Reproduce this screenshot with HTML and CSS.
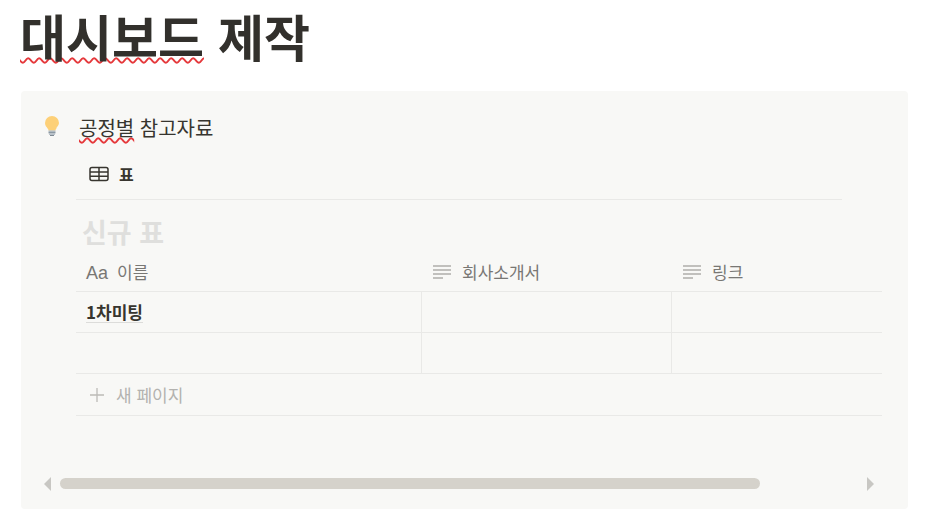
FILE: index.html
```html
<!DOCTYPE html>
<html lang="ko">
<head>
<meta charset="utf-8">
<title>대시보드 제작</title>
<link rel="stylesheet" href="styles.css">
</head>
<body>
<h1 class="title"><span class="spell">대시보드</span> 제작</h1>
<section class="callout">
  <div class="callout-head">
    <svg class="bulb" width="16" height="22" viewBox="0 0 16 22">
      <path d="M8 1a7 7 0 0 0-7 7c0 2.600 1.600 4 2.600 5.400.6.8.9 1.400 1 2.100h6.800c.1-.7.4-1.300 1-2.100C12.400 12 15 10.600 15 8a7 7 0 0 0-7-7z" fill="#fdd078"/>
      <rect x="4.500" y="15.500" width="7" height="1.400" fill="#a9b4bd"/>
      <rect x="4.500" y="17" width="7" height="1.400" fill="#8b98a3"/>
      <rect x="5" y="18.500" width="6" height="1.300" fill="#a9b4bd"/>
      <rect x="6" y="20" width="4" height="1" fill="#7f8a94"/>
    </svg>
    <p class="callout-text"><span class="spell thin">공정별</span> 참고자료</p>
  </div>
  <div class="view-tabs">
    <svg class="tab-icon" width="20" height="16" viewBox="0 0 20 16" fill="none" stroke="#37352f" stroke-width="1.500">
      <rect x="1" y="1.500" width="18" height="13" rx="2"/>
      <path d="M1 6h18M1 10.300h18M10 1.500v13"/>
    </svg>
    <span class="tab-label">표</span>
  </div>
  <h2 class="db-title">신규 표</h2>
  <div class="table">
    <div class="row head">
      <div class="cell c1"><span class="aa">Aa</span><span>이름</span></div>
      <div class="cell c2">
        <svg class="lines" width="19" height="16" viewBox="0 0 19 16" stroke="#8a8883" stroke-width="1.200"><path d="M0 2h18M0 6h18M0 10h18M0 14h10"/></svg>
        <span>회사소개서</span>
      </div>
      <div class="cell c3">
        <svg class="lines" width="19" height="16" viewBox="0 0 19 16" stroke="#8a8883" stroke-width="1.200"><path d="M0 2h18M0 6h18M0 10h18M0 14h10"/></svg>
        <span>링크</span>
      </div>
    </div>
    <div class="row body">
      <div class="cell c1 name"><span class="name-text">1차미팅</span></div>
      <div class="cell c2 bordered"></div>
      <div class="cell c3 bordered"></div>
    </div>
    <div class="row body">
      <div class="cell c1"></div>
      <div class="cell c2 bordered"></div>
      <div class="cell c3 bordered"></div>
    </div>
    <div class="new-page">
      <svg width="14" height="14" viewBox="0 0 14 14" stroke="#bcbbb7" stroke-width="1.300"><path d="M7 0v14M0 7h14"/></svg>
      <span>새 페이지</span>
    </div>
  </div>
  <div class="scrollbar">
    <span class="arrow left"></span>
    <div class="track"><div class="thumb"></div></div>
    <span class="arrow right"></span>
  </div>
</section>
</body>
</html>
```
FILE: styles.css
```css
* { box-sizing: border-box; }
html, body { margin: 0; padding: 0; }
body {
  width: 928px;
  height: 514px;
  overflow: hidden;
  background: #fff;
  color: #37352f;
  font-family: "Noto Sans CJK KR", "Noto Sans", sans-serif;
}
.title {
  margin: 0;
  padding: 0 0 0 20px;
  height: 91px;
  font-size: 50px;
  line-height: 71px;
  font-weight: 700;
  color: #32302c;
}
.spell {
  text-decoration: underline wavy #e5383b;
  text-decoration-thickness: 1.500px;
  text-underline-offset: 0;
  text-decoration-skip-ink: none;
}
.spell.thin { text-underline-offset: 1px; }
.callout {
  margin-left: 21px;
  width: 887px;
  height: 418px;
  background: #f8f8f6;
  border-radius: 4px;
  padding: 24px 0 0 0;
}
.callout-head {
  display: flex;
  align-items: center;
  height: 26px;
  padding-left: 23px;
}
.bulb { display: block; flex: none; margin-right: 19px; margin-top: -4px; }
.callout-text { margin: 0; font-size: 20px; line-height: 26px; color: #37352f; }
.view-tabs {
  margin: 0 0 0 55px;
  width: 766px;
  height: 59px;
  padding: 8px 0 0 13px;
  display: flex;
  align-items: center;
  gap: 10px;
  border-bottom: 1px solid #e9e9e7;
}
.tab-icon { display: block; }
.tab-label { font-size: 16px; font-weight: 700; }
.db-title {
  margin: 0 0 0 61px;
  height: 52px;
  font-size: 27px;
  line-height: 64px;
  font-weight: 700;
  color: #dfdfdd;
}
.table { margin-left: 55px; width: 806px; }
.row { display: flex; border-bottom: 1px solid #e9e9e7; }
.head { height: 40px; color: #787774; font-size: 17px; }
.head .c1 { align-items: baseline; padding-top: 7px; }
.body { height: 41px; }
.cell { display: flex; align-items: center; height: 100%; }
.c1 { width: 345px; padding-left: 10px; }
.c2 { width: 250px; padding-left: 11px; }
.c3 { width: 211px; padding-left: 11px; }
.bordered { border-left: 1px solid #e9e9e7; }
.head .c2, .head .c3 { padding-left: 12px; gap: 10px; }
.aa { margin-right: 9px; font-family: "Liberation Sans", sans-serif; font-size: 18px; }
.name { font-size: 17px; font-weight: 700; }
.name-text { border-bottom: 1px solid #dcdcda; line-height: 21px; }
.lines { display: block; }
.new-page {
  height: 42px;
  display: flex;
  align-items: center;
  gap: 12px;
  padding-left: 14px;
  font-size: 17px;
  color: #b3b2af;
  border-bottom: 1px solid #e9e9e7;
}
.scrollbar {
  margin-top: 62px;
  height: 11px;
  display: flex;
  align-items: center;
  padding-left: 23px;
}
.arrow { display: block; width: 0; height: 0; border-style: solid; flex: none; }
.arrow.left { border-width: 7px 7px 7px 0; border-color: transparent #c8c7c3 transparent transparent; }
.arrow.right { border-width: 7px 0 7px 7px; border-color: transparent transparent transparent #c8c7c3; }
.track { width: 816px; padding-left: 9px; }
.thumb { width: 700px; height: 11px; border-radius: 6px; background: #d5d2cb; }
```
